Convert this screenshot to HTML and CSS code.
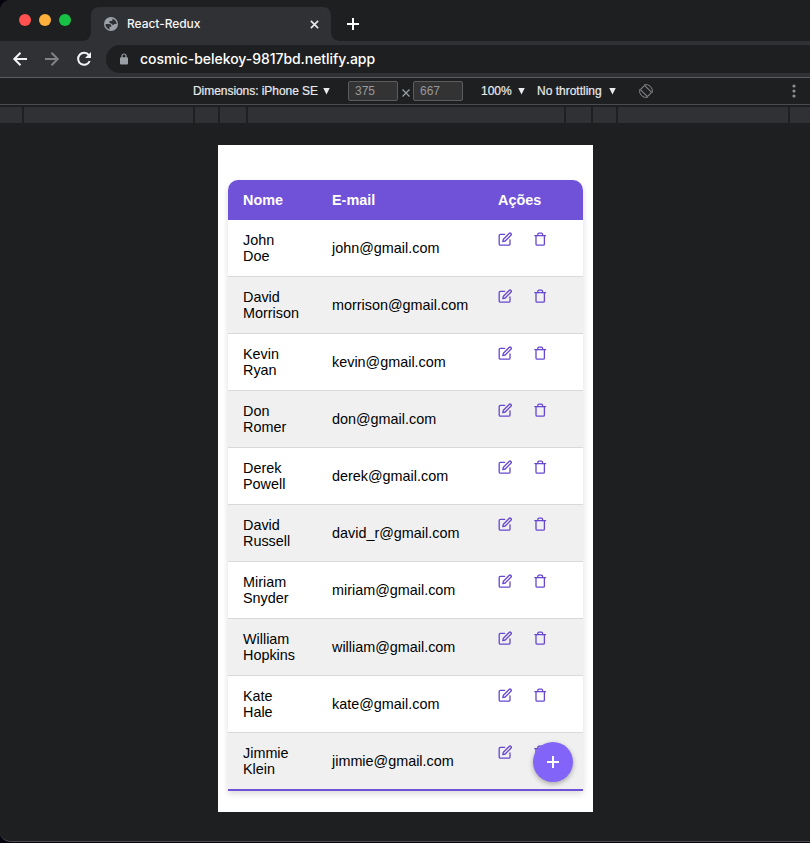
FILE: index.html
```html
<!DOCTYPE html>
<html lang="pt">
<head>
<meta charset="utf-8">
<title>React-Redux</title>
<link rel="stylesheet" href="styles.css">
</head>
<body>
<svg width="0" height="0" class="defs">
  <symbol id="edit" viewBox="0 0 24 24"><path d="M11 4H4a2 2 0 0 0-2 2v14a2 2 0 0 0 2 2h14a2 2 0 0 0 2-2v-7"/><path d="M18.500 2.500a2.121 2.121 0 0 1 3 3L12 15l-4 1 1-4 9.500-9.500z"/></symbol>
  <symbol id="trash" viewBox="0 0 24 24"><path d="M3 6h18"/><path d="M19 6v14a2 2 0 0 1-2 2H7a2 2 0 0 1-2-2V6m3 0V4a2 2 0 0 1 2-2h4a2 2 0 0 1 2 2v2"/></symbol>
</svg>
<div class="window">
  <div class="tabs">
    <div class="lights"><i class="red"></i><i class="amber"></i><i class="green"></i></div>
    <div class="tab">
      <svg class="globe" viewBox="0 0 24 24"><circle cx="12" cy="12" r="12" fill="#9aa0a6"/><path d="M2.500 12H9c2.500 0 3.500 1.200 3.500 3v1.500h-3v4.800C5.500 20.500 2.300 16.500 2.500 12zM14.500 2.800c4.500 1 7.300 5 7.100 9.400h-3.100c-1 0-1.500 1.300-2.800 1.300-2 0-2.200-2-3.700-2.500-1.800-.5-3-.8-3-2.500 0-1.500 1.500-1.800 3-1.800 1.300 0 2.500-.2 2.500-1.700z" fill="#303134"/></svg>
      <span class="tab-title">React-Redux</span>
      <svg class="close" viewBox="0 0 10 10"><path d="M1 1l8 8M9 1L1 9" stroke="#e8eaed" stroke-width="1.800"/></svg>
    </div>
    <svg class="new" viewBox="0 0 12 12"><path d="M6 0v12M0 6h12" stroke="#fff" stroke-width="2"/></svg>
  </div>
  <div class="toolbar">
    <svg class="nav back" viewBox="0 0 16 16"><path d="M15 8H2.500M8.500 1.800 2.300 8l6.200 6.200"/></svg>
    <svg class="nav fwd" viewBox="0 0 16 16"><path d="M1 8h12.500M7.500 1.800 13.700 8l-6.200 6.200"/></svg>
    <svg class="nav reload" viewBox="0 0 16 16"><path d="M12.900 4.200A6 6 0 1 0 13.700 10"/><path d="M15 1v6H9z" fill="#f1f3f4" stroke="none"/></svg>
    <div class="address">
      <svg class="lock" viewBox="0 0 8 12"><path d="M2 5V3a2 2 0 0 1 4 0v2" fill="none" stroke="#9aa0a6" stroke-width="1.200"/><rect y="4.300" width="8" height="7.200" rx="1" fill="#9aa0a6"/></svg>
      <span>cosmic-belekoy-9817bd.netlify.app</span>
    </div>
  </div>
  <div class="devbar">
    <span class="pick dims">Dimensions: iPhone SE</span><b class="caret"></b>
    <span class="field">375</span><svg class="times" viewBox="0 0 8 8"><path d="M.5.5l7 7M7.500.5l-7 7" stroke="#9aa0a6" stroke-width="1.200"/></svg><span class="field">667</span>
    <span class="pick zoom">100%</span><b class="caret"></b>
    <span class="pick throttle">No throttling</span><b class="caret"></b>
    <svg class="rotate" viewBox="0 0 14 14" fill="none" stroke="#85888c"><rect x="4" y="2" width="6" height="10" rx="1" transform="rotate(-45 7 7)"/><path d="M5 .9a6.400 6.400 0 0 1 8.100 8.100M9 13.100A6.400 6.400 0 0 1 .9 5"/></svg>
    <svg class="more" viewBox="0 0 4 14" fill="#8b8e92"><circle cx="2" cy="2" r="1.600"/><circle cx="2" cy="7" r="1.600"/><circle cx="2" cy="12" r="1.600"/></svg>
  </div>
  <div class="ruler"><i></i><i></i><i></i><i></i><i></i><i></i><i></i><i></i><i></i></div>
  <div class="stage">
    <div class="phone">
      <table>
        <colgroup><col class="c-name"><col class="c-mail"><col></colgroup>
        <thead><tr><th>Nome</th><th>E-mail</th><th>Ações</th></tr></thead>
        <tbody>
          <tr><td>John<br>Doe</td><td>john@gmail.com</td><td class="actions"><svg><use href="#edit"/></svg><svg><use href="#trash"/></svg></td></tr>
          <tr><td>David<br>Morrison</td><td>morrison@gmail.com</td><td class="actions"><svg><use href="#edit"/></svg><svg><use href="#trash"/></svg></td></tr>
          <tr><td>Kevin<br>Ryan</td><td>kevin@gmail.com</td><td class="actions"><svg><use href="#edit"/></svg><svg><use href="#trash"/></svg></td></tr>
          <tr><td>Don<br>Romer</td><td>don@gmail.com</td><td class="actions"><svg><use href="#edit"/></svg><svg><use href="#trash"/></svg></td></tr>
          <tr><td>Derek<br>Powell</td><td>derek@gmail.com</td><td class="actions"><svg><use href="#edit"/></svg><svg><use href="#trash"/></svg></td></tr>
          <tr><td>David<br>Russell</td><td>david_r@gmail.com</td><td class="actions"><svg><use href="#edit"/></svg><svg><use href="#trash"/></svg></td></tr>
          <tr><td>Miriam<br>Snyder</td><td>miriam@gmail.com</td><td class="actions"><svg><use href="#edit"/></svg><svg><use href="#trash"/></svg></td></tr>
          <tr><td>William<br>Hopkins</td><td>william@gmail.com</td><td class="actions"><svg><use href="#edit"/></svg><svg><use href="#trash"/></svg></td></tr>
          <tr><td>Kate<br>Hale</td><td>kate@gmail.com</td><td class="actions"><svg><use href="#edit"/></svg><svg><use href="#trash"/></svg></td></tr>
          <tr><td>Jimmie<br>Klein</td><td>jimmie@gmail.com</td><td class="actions"><svg><use href="#edit"/></svg><svg><use href="#trash"/></svg></td></tr>
        </tbody>
      </table>
      <div class="fab"><svg viewBox="0 0 12 12"><path d="M6 0v12M0 6h12" stroke="#fff" stroke-width="2"/></svg></div>
    </div>
  </div>
</div>
</body>
</html>
```
FILE: styles.css
```css
* { box-sizing: border-box; }
body { margin: 0; background: #08040f; font-family: "Liberation Sans", Arial, sans-serif; overflow: hidden; }
svg { display: block; flex: none; }
.defs { position: absolute; }
.window { height: 842px; background: #1e1f21; border-bottom: 1px solid #4b4c4e; border-radius: 10px 0 0 10px; overflow: hidden; display: flex; flex-direction: column; }

.tabs { height: 41px; flex: none; display: flex; background: #1e1f21; }
.lights { width: 91px; padding: 14px 0 0 19px; display: flex; gap: 8px; }
.lights i { width: 12px; height: 12px; border-radius: 50%; }
.red { background: #ff5250; }
.amber { background: #ffb03b; }
.green { background: #17c146; }
.tab { width: 240px; height: 34px; margin-top: 7px; padding: 0 12px 0 13px; display: flex; align-items: center; background: #303134; border-radius: 8px 8px 0 0; position: relative; }
.tab::before, .tab::after { content: ""; position: absolute; bottom: 0; width: 8px; height: 8px; }
.tab::before { left: -8px; background: radial-gradient(circle at 0 0, #1e1f21 7.5px, #303134 8px); }
.tab::after { right: -8px; background: radial-gradient(circle at 100% 0, #1e1f21 7.5px, #303134 8px); }
.globe { width: 14px; height: 14px; }
.tab-title { font: 500 12px/16px Inter, sans-serif; letter-spacing: -.05px; color: #f5f6f7; margin: 0 auto 0 9px; }
.close { width: 9px; height: 9px; }
.new { width: 12px; height: 12px; margin: 18px 0 0 16px; }

.toolbar { height: 37px; flex: none; display: flex; align-items: center; padding-left: 12px; background: #303134; border-bottom: 1px solid #5b5c5f; }
.nav { width: 16px; height: 16px; fill: none; stroke: #f1f3f4; stroke-width: 2; }
.fwd { stroke: #808286; margin-left: 16px; }
.reload { margin: 0 14px 0 16px; }
.address { flex: 1; height: 28px; padding-left: 14px; border-radius: 14px 0 0 14px; background: #1e1f21; display: flex; align-items: center; gap: 12px; font: 500 14px/20px Inter, sans-serif; letter-spacing: -.05px; color: #fff; }
.lock { width: 8px; height: 12px; }

.devbar { height: 27px; flex: none; display: flex; align-items: center; padding-left: 193px; border-bottom: 1px solid #4b4c4f; color: #e8eaed; font-size: 12px; white-space: nowrap; }
.pick { -webkit-text-stroke: .2px; }
.dims { width: 130px; letter-spacing: -.05px; }
.caret { width: 7px; height: 7px; background: #e8eaed; clip-path: polygon(0 0, 100% 0, 50% 100%); }
.field { width: 50px; height: 20px; padding-left: 6px; border: 1px solid #5b5c5e; border-radius: 2px; background: #333334; color: #97999c; line-height: 18px; }
.caret + .field { margin-left: 18px; }
.times { width: 8px; height: 8px; margin: 3px 3px 0 4px; }
.zoom { width: 37px; margin-left: 18px; }
.throttle { width: 72px; margin-left: 12px; }
.rotate { width: 14px; height: 14px; margin-left: 23px; }
.more { width: 4px; height: 14px; margin-left: auto; margin-right: 14px; }

.ruler { height: 16px; flex: none; margin-top: 2px; display: grid; grid-template-columns: 22px 169px 23px 26px 316px 25px 23px 170px 1fr; gap: 2px; }
.ruler i { background: #303134; }

.stage { flex: 1; padding-top: 22px; }
.phone { width: 375px; height: 667px; margin-left: 218px; padding: 35px 10px 0; background: #fff; position: relative; }
table { width: 355px; table-layout: fixed; border-collapse: collapse; border-radius: 10px 10px 0 0; overflow: hidden; box-shadow: 0 3px 6px rgba(0,0,0,.14); font-size: 14.4px; line-height: 16px; color: #000; }
.c-name { width: 89px; }
.c-mail { width: 166px; }
th { background: #7052d9; color: #fff; text-align: left; padding: 12px 15px; }
td { padding: 12px 15px; white-space: nowrap; }
tbody tr { border-bottom: 1px solid #d9d9d9; background: #fff; }
tbody tr:nth-child(even) { background: #f0f0f0; }
tbody tr:last-child { border-bottom: 2px solid #7052d9; }
.actions { vertical-align: top; }
.actions svg { display: inline-block; vertical-align: top; width: 14.4px; height: 14.4px; margin-right: 21px; fill: none; stroke: #6848d0; stroke-width: 2.2; stroke-linecap: round; stroke-linejoin: round; }
.actions svg:last-child { margin-right: 0; }
.fab { position: absolute; right: 20px; bottom: 30px; width: 40px; height: 40px; border-radius: 50%; background: #8265f8; box-shadow: 0 2px 5px rgba(0,0,0,.3); display: flex; align-items: center; justify-content: center; }
.fab svg { width: 12px; height: 12px; }
```
